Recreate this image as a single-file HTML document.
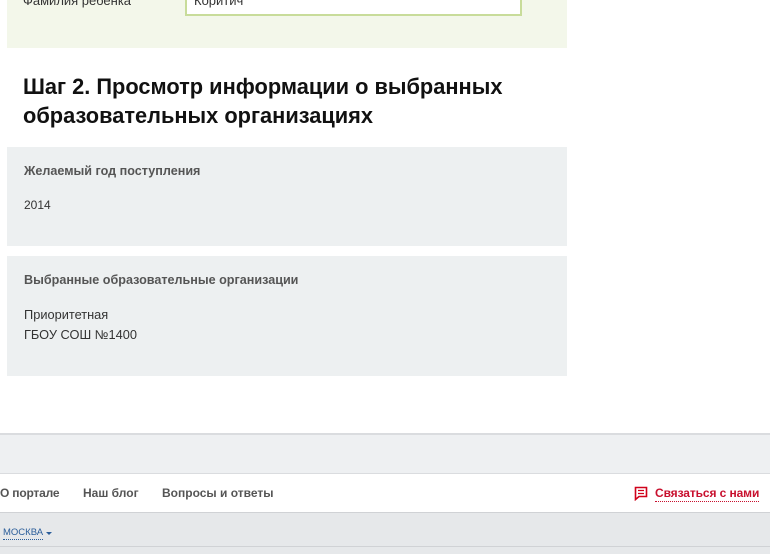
<!DOCTYPE html>
<html><head><meta charset="utf-8"><style>
body{margin:0;width:770px;height:553px;overflow:hidden;background:#fff;font-family:"Liberation Sans",Arial,sans-serif;position:relative}
.a{position:absolute}
</style></head><body>
<div class="a" style="left:7px;top:0;width:560px;height:48px;background:#f3f7ea"></div>
<div class="a" style="left:23px;top:-7px;font-size:13px;color:#333">Фамилия ребенка</div>
<div class="a" style="left:185px;top:-4px;width:333px;height:18px;border:2px solid #c8dc9a;border-top:none;background:#fff"></div>
<div class="a" style="left:194px;top:-7px;font-size:13px;color:#333">Коритич</div>
<div class="a" style="left:23px;top:72px;font-size:21.8px;font-weight:bold;color:#111;line-height:29px">Шаг 2. Просмотр информации о выбранных<br>образовательных организациях</div>
<div class="a" style="left:7px;top:147px;width:560px;height:99px;background:#edf0f1"></div>
<div class="a" style="left:24px;top:164px;font-size:12.6px;font-weight:bold;color:#555">Желаемый год поступления</div>
<div class="a" style="left:24px;top:198px;font-size:12px;color:#333">2014</div>
<div class="a" style="left:7px;top:256px;width:560px;height:120px;background:#edf0f1"></div>
<div class="a" style="left:24px;top:273px;font-size:12.6px;font-weight:bold;color:#555">Выбранные образовательные организации</div>
<div class="a" style="left:24px;top:305px;font-size:12.8px;color:#333;line-height:20px">Приоритетная<br>ГБОУ СОШ №1400</div>
<div class="a" style="left:0;top:433px;width:770px;height:41px;background:#eef0f2;border-top:2px solid #dadcdf;border-bottom:1px solid #dadcdf;box-sizing:border-box"></div>
<div class="a" style="left:0;top:486px;font-size:12px;font-weight:bold;color:#555;letter-spacing:-0.2px">О портале</div>
<div class="a" style="left:83px;top:486px;font-size:12px;font-weight:bold;color:#555">Наш блог</div>
<div class="a" style="left:162px;top:486px;font-size:12px;font-weight:bold;color:#555">Вопросы и ответы</div>
<svg class="a" style="left:634px;top:486px" width="14" height="15" viewBox="0 0 14 15"><path d="M1.5 1.5h11v9H5l-3.5 3z" fill="none" stroke="#d0021b" stroke-width="1.6"/><path d="M4 4.5h6M4 7.5h6" stroke="#d0021b" stroke-width="1.3"/></svg>
<div class="a" style="left:655px;top:486px;font-size:12px;font-weight:bold;color:#c8102e;border-bottom:1px dotted #c8102e;line-height:15px;letter-spacing:-0.1px">Связаться с нами</div>
<div class="a" style="left:0;top:512px;width:770px;height:41px;background:#e6e8ea;border-top:1px solid #d0d2d5"></div>
<div class="a" style="left:0;top:546px;width:770px;height:1px;background:#d0d2d5"></div>
<div class="a" style="left:3px;top:527px;font-size:9.5px;color:#2a5d9a;border-bottom:1px dotted #2a5d9a;line-height:12px">МОСКВА</div>
<div class="a" style="left:46px;top:532px;width:0;height:0;border-left:3px solid transparent;border-right:3px solid transparent;border-top:3px solid #2a5d9a"></div>
</body></html>
